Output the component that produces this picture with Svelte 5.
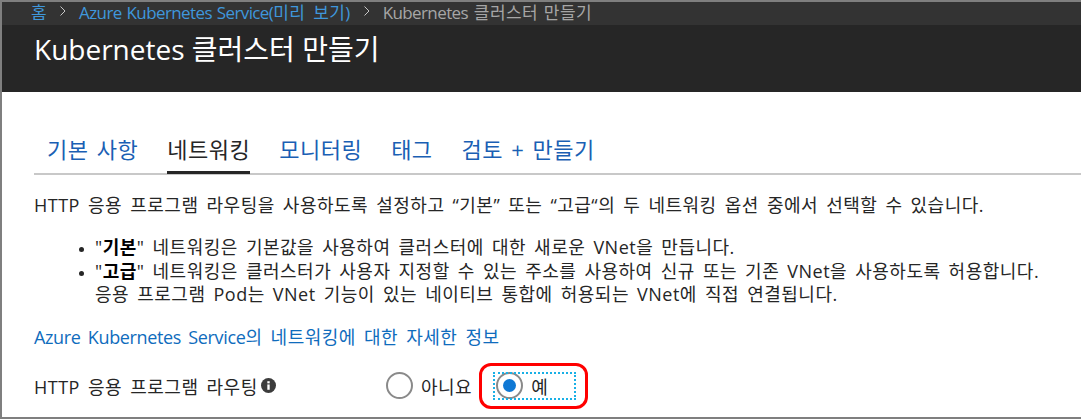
<script>
  const tabs = ["기본 사항", "네트워킹", "모니터링", "태그", "검토 + 만들기"];
  const active = "네트워킹";
</script>

<div class="frame">
  <nav class="crumbs">
    <a href="#home" class="home">홈</a>
    <svg class="chev" viewBox="0 0 8 12"><path d="M1.5 1.5 6 6l-4.500 4.500" /></svg>
    <a href="#aks"><span class="latin">Azure Kubernetes Service(</span>미리 보기)</a>
    <svg class="chev" viewBox="0 0 8 12"><path d="M1.5 1.5 6 6l-4.500 4.500" /></svg>
    <span><span class="latin">Kubernetes</span> 클러스터 만들기</span>
  </nav>
  <header class="title">
    <h1>Kubernetes 클러스터 만들기</h1>
  </header>

  <main>
    <div class="tabs">
      {#each tabs as tab (tab)}
        <button class="tab" class:active={tab === active}>{tab}</button>
      {/each}
    </div>

    <p class="intro">HTTP 응용 프로그램 라우팅을 사용하도록 설정하고 “기본” 또는 “고급“의 두 네트워킹 옵션 중에서 선택할 수 있습니다.</p>

    <ul>
      <li>"<b>기본</b>" 네트워킹은 기본값을 사용하여 클러스터에 대한 새로운 VNet을 만듭니다.</li>
      <li>"<b>고급</b>" 네트워킹은 클러스터가 사용자 지정할 수 있는 주소를 사용하여 신규 또는 기존 VNet을 사용하도록 허용합니다.<br />응용 프로그램 Pod는 VNet 기능이 있는 네이티브 통합에 허용되는 VNet에 직접 연결됩니다.</li>
    </ul>

    <a class="more" href="#more"><span class="latin-sm">Azure Kubernetes Service</span>의 네트워킹에 대한 자세한 정보</a>

    <div class="field">
      <div class="label">
        HTTP 응용 프로그램 라우팅
        <svg class="info" viewBox="0 0 14 14">
          <circle cx="7" cy="7" r="7" fill="#3c3c3c" />
          <rect x="5.900" y="6" width="2.200" height="5" fill="#fff" />
          <rect x="5.900" y="3" width="2.200" height="2" fill="#fff" />
        </svg>
      </div>
      <div class="options">
        <div class="radio"><span class="dot"></span>아니요</div>
        <div class="selected">
          <div class="radio focus"><span class="dot on"></span>예</div>
        </div>
      </div>
    </div>
  </main>
</div>

<style>
  :global(body) {
    margin: 0;
    background: #fff;
  }

  .frame {
    width: 1081px;
    height: 419px;
    box-sizing: border-box;
    border-top: 2px solid #7f7f7f;
    border-left: 2px solid #7f7f7f;
    border-bottom: 2px solid #7f7f7f;
    overflow: hidden;
    font-family: "Open Sans", "Noto Sans CJK KR", sans-serif;
    color: #262626;
  }

  .crumbs {
    height: 23px;
    box-sizing: border-box;
    padding: 0 0 5px 29px;
    background: #333;
    display: flex;
    align-items: center;
    font-size: 17px;
    color: #a6a6a6;
    white-space: nowrap;
    letter-spacing: 0.4px;
    word-spacing: 1px;
  }

  .latin {
    letter-spacing: -0.6px;
    word-spacing: 1px;
  }

  .crumbs a {
    color: #3f97dc;
    text-decoration: none;
    word-spacing: 3px;
  }

  .chev {
    width: 8px;
    height: 12px;
    margin: 0 12px;
    fill: none;
    stroke: #c8c8c8;
    stroke-width: 1;
  }

  .title {
    height: 67px;
    background: #262626;
    box-sizing: border-box;
    padding: 6px 0 0 32px;
  }

  h1 {
    margin: 0;
    font-size: 28px;
    font-weight: 400;
    line-height: 36px;
    color: #fff;
  }

  main {
    padding: 0 0 0 32px;
  }

  .tabs {
    margin-top: 39px;
    display: flex;
    gap: 29px;
    height: 44px;
    box-sizing: border-box;
    padding-left: 13px;
    border-bottom: 2px solid #c8c8c8;
  }

  .tab {
    all: unset;
    font-size: 22px;
    letter-spacing: 0.5px;
    word-spacing: 2px;
    line-height: 28px;
    height: 43px;
    box-sizing: border-box;
    padding-bottom: 7px;
    color: #1a5fb4;
    white-space: nowrap;
  }

  .tab.active {
    color: #262626;
    padding-bottom: 4px;
    border-bottom: 3px solid #262626;
  }

  .intro,
  ul,
  .more,
  .field {
    font-size: 18px;
    letter-spacing: 0.5px;
    word-spacing: 2.9px;
  }

  .intro {
    margin: 19px 0 0;
    line-height: 23px;
    white-space: nowrap;
  }

  ul {
    margin: 19px 0 0;
    padding-left: 61px;
    line-height: 23.500px;
    white-space: nowrap;
  }

  li::marker {
    font-size: 13px;
  }

  b {
    font-weight: 700;
    color: #000;
  }

  .more {
    display: block;
    margin-top: 18px;
    line-height: 24px;
    color: #0f6cbd;
    text-decoration: none;
  }

  .latin-sm {
    letter-spacing: -0.35px;
  }

  .field {
    display: flex;
    align-items: center;
    margin-top: 14px;
    height: 46px;
  }

  .label {
    width: 352px;
    display: flex;
    align-items: center;
  }

  .info {
    width: 15px;
    height: 15px;
    margin-left: 3px;
  }

  .options {
    display: flex;
    align-items: center;
    gap: 7px;
  }

  .radio {
    display: flex;
    align-items: center;
    gap: 8px;
  }

  .dot {
    width: 27px;
    height: 27px;
    flex: none;
    box-sizing: border-box;
    border: 2px solid #8a8a8a;
    border-radius: 50%;
    background: #fff;
    display: flex;
    align-items: center;
    justify-content: center;
  }

  .dot.on::after {
    content: "";
    width: 13px;
    height: 13px;
    border-radius: 50%;
    background: #0f78d4;
  }

  .selected {
    border: 3px solid #f00;
    border-radius: 12px;
    padding: 7px 10px 7px 12px;
  }

  .focus {
    width: 81px;
    height: 26px;
    box-sizing: border-box;
    padding-left: 2px;
    outline: 2px dotted #19b0e6;
    outline-offset: -1px;
  }
</style>
